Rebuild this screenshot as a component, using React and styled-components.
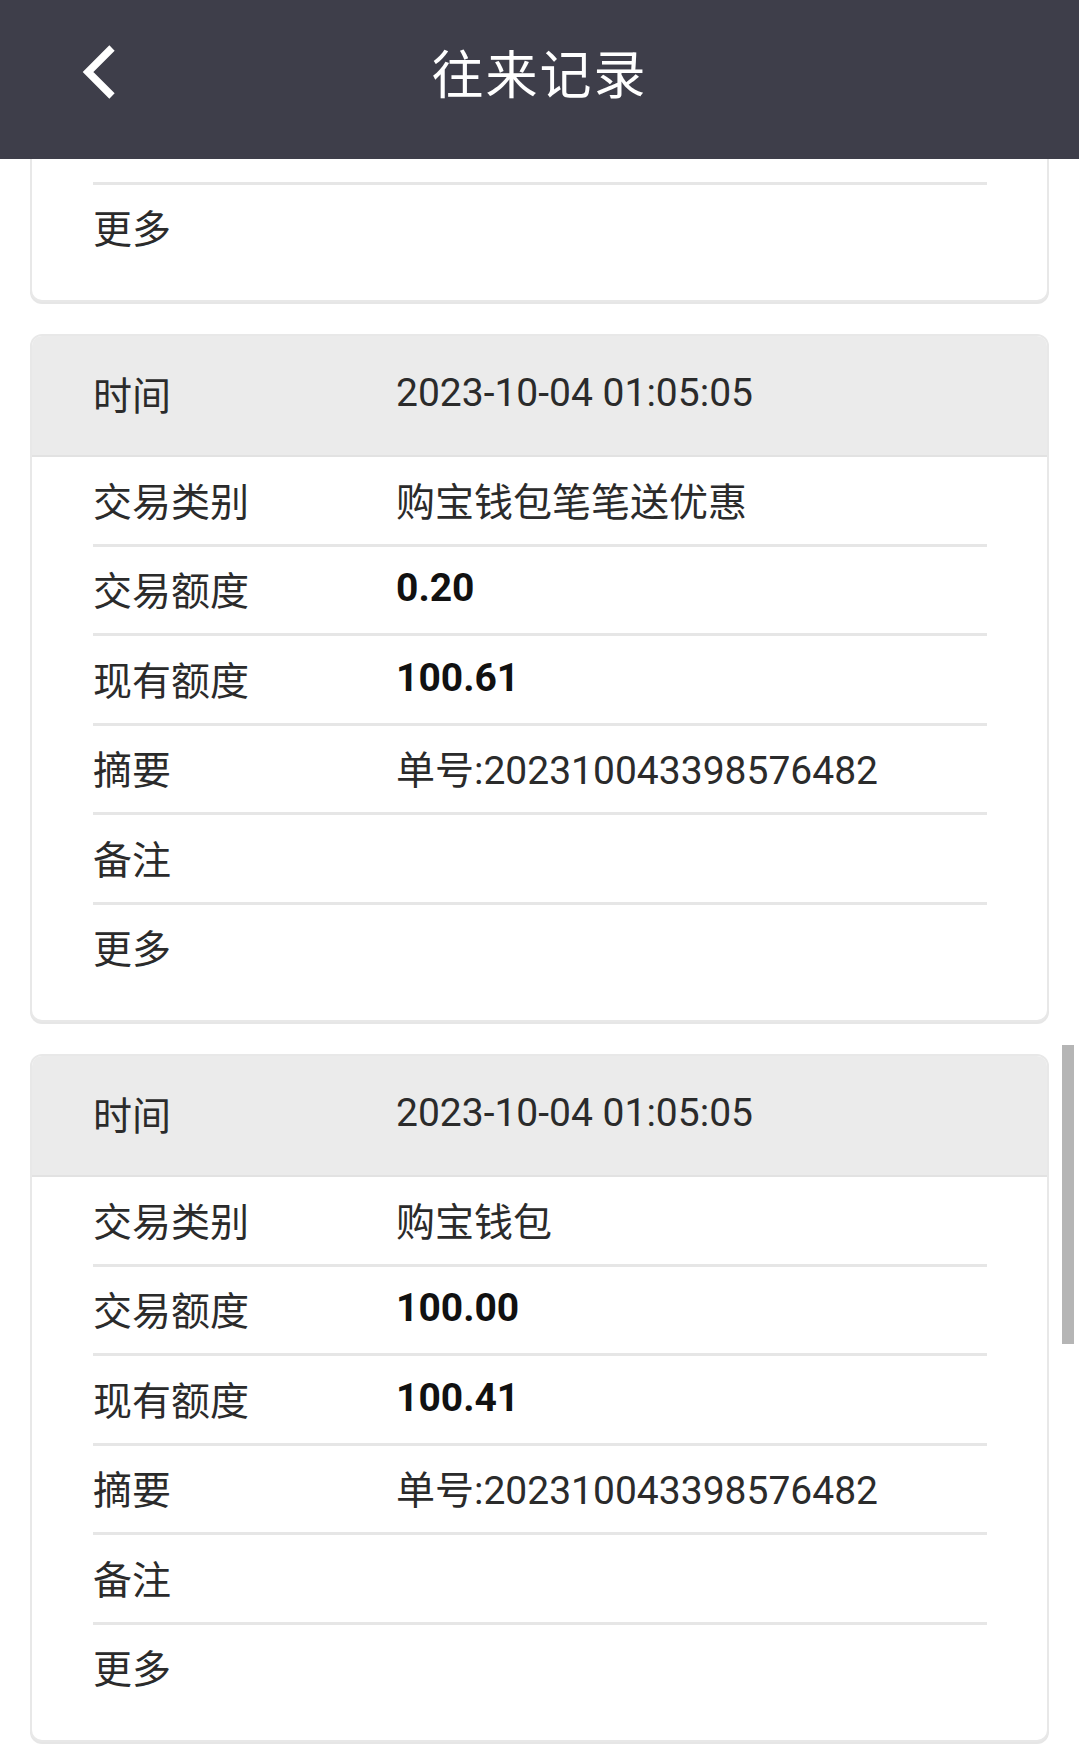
import React from "react";
import styled, { createGlobalStyle } from "styled-components";

const records = [
  { time: "2023-10-04 01:05:05", type: "购宝钱包", amount: "100.00", balance: "100.41", memo: "单号:202310043398576482", note: "" },
  { time: "2023-10-04 01:05:05", type: "购宝钱包笔笔送优惠", amount: "0.20", balance: "100.61", memo: "单号:202310043398576482", note: "" },
  { time: "2023-10-04 01:05:05", type: "购宝钱包", amount: "100.00", balance: "100.41", memo: "单号:202310043398576482", note: "" },
];

const App = () => {
  return (
    <Page>
      <GlobalStyle />
      <TopBar>
        <BackButton>
          <svg width="44" height="60" viewBox="0 0 44 60">
            <path d="M36 5 L12 29 L36 53" fill="none" stroke="#fff" strokeWidth="7.5" strokeLinejoin="miter" />
          </svg>
        </BackButton>
        <Title>往来记录</Title>
      </TopBar>

      <Viewport>
        <List>
          {records.map((r, i) => (
            <Card key={i}>
              <CardHead>
                <Label>时间</Label>
                <Value>{r.time}</Value>
              </CardHead>
              <CardBody>
                <Row>
                  <Label>交易类别</Label>
                  <Value>{r.type}</Value>
                </Row>
                <Row>
                  <Label>交易额度</Label>
                  <Value $bold>{r.amount}</Value>
                </Row>
                <Row>
                  <Label>现有额度</Label>
                  <Value $bold>{r.balance}</Value>
                </Row>
                <Row>
                  <Label>摘要</Label>
                  <Value>{r.memo}</Value>
                </Row>
                <Row>
                  <Label>备注</Label>
                  <Value>{r.note}</Value>
                </Row>
                <Row $last>
                  <Label>更多</Label>
                </Row>
              </CardBody>
            </Card>
          ))}
        </List>
        <ScrollThumb />
      </Viewport>
    </Page>
  );
};

const GlobalStyle = createGlobalStyle`
  *, *::before, *::after {
    box-sizing: border-box;
  }
  html, body {
    margin: 0;
    padding: 0;
    background: #ffffff;
  }
  body {
    font-family: Roboto, "Noto Sans CJK SC", sans-serif;
  }
`;

const Page = styled.div`
  width: 1079px;
  height: 1763px;
  display: flex;
  flex-direction: column;
  overflow: hidden;
  background: #fff;
`;

const TopBar = styled.div`
  position: relative;
  height: 159px;
  flex-shrink: 0;
  background-color: #3e3e4a;
  display: flex;
  align-items: center;
  justify-content: center;
  z-index: 2;
`;

const BackButton = styled.div`
  position: absolute;
  left: 76px;
  top: 43px;
  width: 44px;
  height: 60px;
`;

const Title = styled.div`
  color: #ffffff;
  font-family: "Noto Sans CJK SC", sans-serif;
  font-size: 52px;
  letter-spacing: 2px;
  margin-top: -16px;
`;

const Viewport = styled.div`
  position: relative;
  flex: 1;
  overflow: hidden;
`;

const List = styled.div`
  display: flex;
  flex-direction: column;
  gap: 32px;
  padding: 32px 30px;
  margin-top: -577px;
`;

const Card = styled.div`
  border: 2px solid #e8e8e8;
  border-radius: 12px;
  overflow: hidden;
  background: #fff;
  box-shadow: 0 2px 0 #e6e6e6;
`;

const CardHead = styled.div`
  height: 121px;
  padding: 0 61px 5px;
  background-color: #ebebeb;
  border-bottom: 2px solid #e2e2e2;
  display: flex;
  align-items: center;
`;

const CardBody = styled.div`
  padding: 0 60px 29px 61px;
`;

const Row = styled.div`
  height: ${({ $last }) => ($last ? "86.5px" : "89.5px")};
  padding-bottom: ${({ $last }) => ($last ? "4px" : "3px")};
  display: flex;
  align-items: center;
  border-bottom: ${({ $last }) => ($last ? "none" : "3px solid #e6e6e6")};
`;

const Label = styled.div`
  width: 303px;
  flex-shrink: 0;
  font-size: 39px;
  color: #2b2b2b;
`;

const Value = styled.div`
  font-size: 39px;
  color: ${({ $bold }) => ($bold ? "#111" : "#2b2b2b")};
  font-weight: ${({ $bold }) => ($bold ? 700 : 400)};
  white-space: nowrap;
`;

const ScrollThumb = styled.div`
  position: absolute;
  right: 5px;
  top: 886px;
  width: 12px;
  height: 299px;
  background: #b5b5b5;
`;

export default App;
